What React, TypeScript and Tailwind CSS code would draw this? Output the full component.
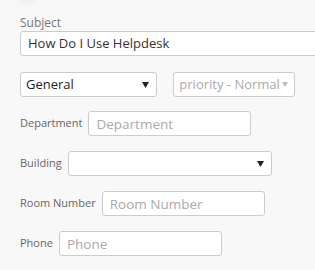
function Caret({ className, w = 7, h = 6 }: { className: string; w?: number; h?: number }) {
  return (
    <svg width={w} height={h} viewBox="0 0 7 6" className={className}>
      <path d="M0 0 H7 L3.5 6 Z" fill="currentColor" />
    </svg>
  )
}

function Field({ label, placeholder, width }: { label: string; placeholder: string; width: string }) {
  return (
    <div className="flex items-center gap-[6px]">
      <span className="text-[11px] text-[#666]">{label}</span>
      <input
        placeholder={placeholder}
        className={`h-[25px] ${width} rounded-[3px] border border-[#ccc] bg-white px-[7px] text-[13.5px] text-[#333] placeholder:text-[#aaa] outline-none`}
      />
    </div>
  )
}

export default function App() {
  return (
    <main
      className="relative h-[270px] w-[315px] overflow-hidden bg-[#f8f8f8] px-5"
      style={{ fontFamily: '"Open Sans", sans-serif' }}
    >
      <div className="absolute left-[16px] top-[-14px] h-[17px] w-[22px] rounded-full bg-[#eee] blur-[2px]" />

      <div className="pt-[16px] text-[12px] leading-[14px] text-[#777]">Subject</div>
      <div className="mr-[-30px] mt-[1px] flex h-[25px] items-center rounded-[3px] border border-[#ccc] bg-white px-[7px] text-[13px] text-[#333]">
        How Do I Use Helpdesk
      </div>

      <div className="mt-[16px] flex items-center gap-4">
        <div className="flex h-[25px] w-[140px] items-center justify-between rounded-[3px] border border-[#ccc] bg-white pl-[5px] pr-[7px] text-[13px] text-[#222]">
          <span>General</span>
          <Caret className="text-[#222]" />
        </div>
        <div className="flex h-[25px] w-[124px] items-center justify-between whitespace-nowrap rounded-[3px] border border-[#ccc] bg-white pl-[5px] pr-[6px] text-[13px] text-[#aaa]">
          <span>priority - Normal</span>
          <Caret className="text-[#bbb]" w={6} h={5} />
        </div>
      </div>

      <div className="mt-[14px] flex flex-col gap-[15px]">
        <Field label="Department" placeholder="Department" width="w-[163px]" />
        <div className="flex items-center gap-[6px]">
          <span className="text-[11px] text-[#666]">Building</span>
          <div className="flex h-[25px] w-[204px] items-center justify-end rounded-[3px] border border-[#ccc] bg-white pr-[7px]">
            <Caret className="text-[#222]" />
          </div>
        </div>
        <Field label="Room Number" placeholder="Room Number" width="w-[163px]" />
        <Field label="Phone" placeholder="Phone" width="w-[163px]" />
      </div>
    </main>
  )
}
